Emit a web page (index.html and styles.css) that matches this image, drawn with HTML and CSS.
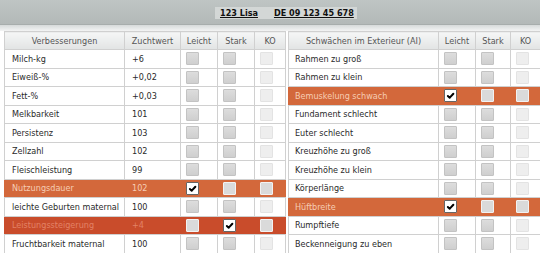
FILE: index.html
```html
<!DOCTYPE html>
<html lang="de">
<head>
<meta charset="utf-8">
<title>123 Lisa</title>
<link rel="stylesheet" href="styles.css">
</head>
<body>
<div class="topbar">
  <div class="title"><span>123 Lisa</span><span>DE 09 123 45 678</span></div>
</div>
<div class="strip"></div>
<div class="tables">
  <table class="grid left">
    <colgroup><col class="w-name"><col class="w-val"><col class="w-l"><col class="w-s"><col class="w-ko"></colgroup>
    <thead><tr><th>Verbesserungen</th><th>Zuchtwert</th><th>Leicht</th><th>Stark</th><th>KO</th></tr></thead>
    <tbody>
      <tr><td>Milch-kg</td><td>+6</td><td class="c"><span class="cb"></span></td><td class="c s"><span class="cb"></span></td><td class="c"><span class="cb ko"></span></td></tr>
      <tr><td>Eiweiß-%</td><td>+0,02</td><td class="c"><span class="cb"></span></td><td class="c s"><span class="cb"></span></td><td class="c"><span class="cb ko"></span></td></tr>
      <tr><td>Fett-%</td><td>+0,03</td><td class="c"><span class="cb"></span></td><td class="c s"><span class="cb"></span></td><td class="c"><span class="cb ko"></span></td></tr>
      <tr><td>Melkbarkeit</td><td>101</td><td class="c"><span class="cb"></span></td><td class="c s"><span class="cb"></span></td><td class="c"><span class="cb ko"></span></td></tr>
      <tr><td>Persistenz</td><td>103</td><td class="c"><span class="cb"></span></td><td class="c s"><span class="cb"></span></td><td class="c"><span class="cb ko"></span></td></tr>
      <tr><td>Zellzahl</td><td>102</td><td class="c"><span class="cb"></span></td><td class="c s"><span class="cb"></span></td><td class="c"><span class="cb ko"></span></td></tr>
      <tr><td>Fleischleistung</td><td>99</td><td class="c"><span class="cb"></span></td><td class="c s"><span class="cb"></span></td><td class="c"><span class="cb ko"></span></td></tr>
      <tr class="hl"><td>Nutzungsdauer</td><td>102</td><td class="c"><span class="cb on"><svg viewBox="0 0 10 10"><path d="M2.6 5.4 L4.3 7 L7.6 3.4"/></svg></span></td><td class="c s"><span class="cb"></span></td><td class="c"><span class="cb"></span></td></tr>
      <tr><td>leichte Geburten maternal</td><td>100</td><td class="c"><span class="cb"></span></td><td class="c s"><span class="cb"></span></td><td class="c"><span class="cb ko"></span></td></tr>
      <tr class="hl dark"><td>Leistungssteigerung</td><td>+4</td><td class="c"><span class="cb"></span></td><td class="c s"><span class="cb on"><svg viewBox="0 0 10 10"><path d="M2.6 5.4 L4.3 7 L7.6 3.4"/></svg></span></td><td class="c"><span class="cb"></span></td></tr>
      <tr><td>Fruchtbarkeit maternal</td><td>100</td><td class="c"><span class="cb"></span></td><td class="c s"><span class="cb"></span></td><td class="c"><span class="cb ko"></span></td></tr>
    </tbody>
  </table>
  <table class="grid right">
    <colgroup><col class="w-rname"><col class="w-rl"><col class="w-rs"><col class="w-rko"></colgroup>
    <thead><tr><th>Schwächen im Exterieur (AI)</th><th>Leicht</th><th>Stark</th><th>KO</th></tr></thead>
    <tbody>
      <tr><td>Rahmen zu groß</td><td class="c"><span class="cb"></span></td><td class="c s"><span class="cb"></span></td><td class="c"><span class="cb ko"></span></td></tr>
      <tr><td>Rahmen zu klein</td><td class="c"><span class="cb"></span></td><td class="c s"><span class="cb"></span></td><td class="c"><span class="cb ko"></span></td></tr>
      <tr class="hl"><td>Bemuskelung schwach</td><td class="c"><span class="cb on"><svg viewBox="0 0 10 10"><path d="M2.6 5.4 L4.3 7 L7.6 3.4"/></svg></span></td><td class="c s"><span class="cb"></span></td><td class="c"><span class="cb"></span></td></tr>
      <tr><td>Fundament schlecht</td><td class="c"><span class="cb"></span></td><td class="c s"><span class="cb"></span></td><td class="c"><span class="cb ko"></span></td></tr>
      <tr><td>Euter schlecht</td><td class="c"><span class="cb"></span></td><td class="c s"><span class="cb"></span></td><td class="c"><span class="cb ko"></span></td></tr>
      <tr><td>Kreuzhöhe zu groß</td><td class="c"><span class="cb"></span></td><td class="c s"><span class="cb"></span></td><td class="c"><span class="cb ko"></span></td></tr>
      <tr><td>Kreuzhöhe zu klein</td><td class="c"><span class="cb"></span></td><td class="c s"><span class="cb"></span></td><td class="c"><span class="cb ko"></span></td></tr>
      <tr><td>Körperlänge</td><td class="c"><span class="cb"></span></td><td class="c s"><span class="cb"></span></td><td class="c"><span class="cb ko"></span></td></tr>
      <tr class="hl"><td>Hüftbreite</td><td class="c"><span class="cb on"><svg viewBox="0 0 10 10"><path d="M2.6 5.4 L4.3 7 L7.6 3.4"/></svg></span></td><td class="c s"><span class="cb"></span></td><td class="c"><span class="cb"></span></td></tr>
      <tr><td>Rumpftiefe</td><td class="c"><span class="cb"></span></td><td class="c s"><span class="cb"></span></td><td class="c"><span class="cb ko"></span></td></tr>
      <tr><td>Beckenneigung zu eben</td><td class="c"><span class="cb"></span></td><td class="c s"><span class="cb"></span></td><td class="c"><span class="cb ko"></span></td></tr>
    </tbody>
  </table>
</div>
</body>
</html>
```
FILE: styles.css
```css
html, body {
  margin: 0;
  padding: 0;
  background: #ffffff;
  overflow: hidden;
}
body {
  font-family: "DejaVu Sans Condensed", "DejaVu Sans", sans-serif;
  font-stretch: condensed;
  font-size: 9px;
  color: #2a2a2a;
}
.topbar {
  height: 25px;
  box-sizing: border-box;
  background: linear-gradient(#bfc5c4, #b3b9b8);
  border-bottom: 1px solid #a7adac;
  padding-top: 7px;
  padding-left: 215px;
}
.title {
  display: inline-flex;
  align-items: center;
  gap: 16px;
  height: 12px;
  padding: 0 3px 0 5px;
  background: #d3d7d6;
  font-weight: bold;
  font-size: 9px;
  line-height: 12px;
  color: #111;
  text-decoration: underline;
}
.strip {
  height: 6px;
  background: linear-gradient(#d6dada, #f3f4f4);
}
.tables {
  display: flex;
  gap: 2px;
  padding-left: 4px;
}
.grid {
  border-collapse: collapse;
  table-layout: fixed;
}
.grid.left { width: 281px; }
.grid.right { width: 252px; }
.w-name { width: 120px; }
.w-val { width: 56px; }
.w-l { width: 37px; }
.w-s { width: 37px; }
.w-ko { width: 31px; }
.w-rname { width: 150px; }
.w-rl { width: 37px; }
.w-rs { width: 35px; }
.w-rko { width: 30px; }
.grid th, .grid td {
  border: 1px solid #d0d0d0;
  padding: 0;
  white-space: nowrap;
  overflow: hidden;
}
.grid th {
  height: 17px;
  background: linear-gradient(#f5f6f6, #e2e4e4);
  font-weight: normal;
  color: #555;
  text-align: center;
}
.grid td {
  height: 17.5px;
  padding-left: 7px;
}
.grid.right td { padding-left: 6px; }
.grid td.c { padding-left: 5px; }
.grid td.s { border-left-color: #a2a6a6; }
.cb {
  display: block;
  width: 11px;
  height: 11px;
  border: 1px solid #c3c3c3;
  border-radius: 1px;
  background: linear-gradient(#dddddd, #cfcfcf);
}
.cb.ko {
  background: #eeeeee;
  border-color: #e3e3e3;
}
.hl td {
  background: #d3683b;
  color: #f6cdb4;
  border-left-color: #d3683b;
  border-right-color: #d3683b;
}
.hl td.s { border-left-color: #c9633a; }
.hl.dark td {
  background: #c94c2b;
  color: #e38266;
  border-left-color: #c94c2b;
  border-right-color: #c94c2b;
}
.hl .cb {
  background: #dadada;
  border-color: #f2f2f2;
}
.cb.on, .hl .cb.on {
  background: #ffffff;
  border-color: #666;
}
.cb svg {
  display: block;
  width: 11px;
  height: 11px;
}
.cb svg path {
  fill: none;
  stroke: #000;
  stroke-width: 1.8;
  stroke-linecap: round;
  stroke-linejoin: round;
}
```
